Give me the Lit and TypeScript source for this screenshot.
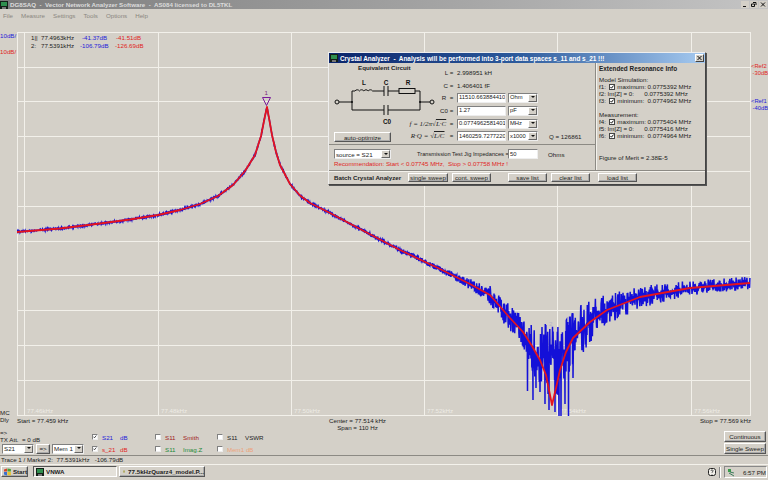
import {LitElement, html, css, svg} from 'lit';
import {customElement} from 'lit/decorators.js';

type Pt = [number, number];

// model curve read off the reference, in page pixels
const RED: Pt[] = [
  [17, 232], [60, 228.5], [100, 223.5], [130, 219.5], [158, 215], [180, 210], [200, 204], [218, 196],
  [233, 185], [245, 171], [255, 155], [261, 136], [265, 116], [267, 107], [269, 118], [272, 135],
  [276, 152], [280, 165], [290, 184], [300, 195.5], [310, 203], [320, 208], [330, 213], [360, 229],
  [400, 250], [440, 269], [470, 284], [490, 295], [510, 318], [523, 332], [532, 346], [540, 360],
  [546, 375], [552, 405], [556, 388], [560, 370], [566, 352], [573, 338], [590, 322], [607, 310],
  [640, 297], [690, 288], [750, 283],
];

// half height of the measured trace's noise band along x
const NOISE: Pt[] = [
  [17, 1], [330, 1], [400, 2], [440, 3], [460, 4], [480, 7], [500, 12], [520, 15], [530, 22],
  [545, 36], [552, 40], [560, 38], [575, 28], [600, 18], [640, 11], [700, 7], [750, 7],
];

// deep notches below the band, round the dip
const SPIKES: Pt[] = [
  [527.5, 391], [533, 400], [536, 388], [540, 392], [545, 404], [549, 410], [555, 412],
  [559, 416], [561, 416], [565, 404], [568.5, 416], [573, 378],
];

const lerp = (t: Pt[], x: number) => {
  for (let i = 1; i < t.length; i++) {
    if (x <= t[i][0]) {
      const [x0, y0] = t[i - 1];
      const [x1, y1] = t[i];
      return y0 + ((y1 - y0) * (x - x0)) / (x1 - x0);
    }
  }
  return t[t.length - 1][1];
};

const rng = (seed: number) => () => {
  seed = (seed + 0x6d2b79f5) | 0;
  let t = Math.imul(seed ^ (seed >>> 15), 1 | seed);
  t = (t + Math.imul(t ^ (t >>> 7), 61 | t)) ^ t;
  return ((t ^ (t >>> 14)) >>> 0) / 4294967296;
};

const bluePoints = () => {
  const r = rng(77);
  const step = 0.3;
  const pts: string[] = [];
  for (let x = 17; x <= 750; x += step) {
    // bunch the samples towards the middle so the band reads as solid with spiky edges
    const u = (r() - 0.5) * 2;
    const n = Math.sign(u) * Math.abs(u) ** 1.6;
    const y = Math.min(lerp(RED, x), 358) + n * lerp(NOISE, x);
    pts.push(`${x.toFixed(2)},${y.toFixed(1)}`);
    const spike = SPIKES.find(s => s[0] >= x && s[0] < x + step);
    if (spike) pts.push(spike.join(','));
  }
  return pts.join(' ');
};

const redPoints = RED.map(p => p.join(',')).join(' ');
const VX = [17, 24, 158, 291, 424, 557, 691, 750];
const HY = [32, 67, 101, 136, 171, 206, 241, 275, 310, 345, 380, 415];
const AXIS = ['77.46', '77.48', '77.50', '77.52', '77.54', '77.56'];

@customElement('app-root')
export class AppRoot extends LitElement {
  static styles = css`
    :host {
      display: flex;
      flex-direction: column;
      position: relative;
      width: 768px;
      height: 480px;
      overflow: hidden;
      background: #d4d0c8;
      color: #222;
      font: 6.2px/7px 'Liberation Sans', Arial, sans-serif;
    }
    .title {
      height: 9px;
      flex: none;
      display: flex;
      align-items: center;
      gap: 2px;
      background: linear-gradient(90deg, #7c7c7c, #a0a0a0 52%, #c4c4c4);
      color: #dcdcdc;
      font-weight: bold;
      font-size: 6.2px;
      white-space: pre;
    }
    .winbtns {
      margin-left: auto;
      margin-right: 1px;
      display: flex;
      gap: 1px;
    }
    .winbtns svg {
      display: block;
      width: 8px;
      height: 7px;
    }
    .menu {
      height: 12px;
      flex: none;
      display: flex;
      gap: 8px;
      align-items: center;
      padding-left: 3px;
      color: #8a8780;
    }
    .chart-row {
      display: flex;
      flex: none;
      padding-top: 11px;
    }
    .left-labels {
      width: 17px;
      white-space: nowrap;
      flex: none;
    }
    .left-labels div + div {
      margin-top: 9px;
    }
    .chart {
      display: block;
      width: 734px;
      height: 384px;
      flex: none;
    }
    .chart text {
      font: 6.2px 'Liberation Sans', Arial, sans-serif;
    }
    .chart .axis {
      fill: #eeece6;
    }
    .right-labels {
      padding-top: 31px;
      white-space: nowrap;
      font-size: 5.8px;
    }
    .right-labels div {
      height: 7px;
    }
    .right-labels .gap {
      margin-bottom: 21px;
    }
    .blue { color: #2420d8; }
    .red { color: #e02424; }
    .dkred { color: #a02020; }
    .green { color: #1e8a3a; }
    .orange { color: #eda27c; }
    .lines {
      height: 16px;
      flex: none;
      display: grid;
      grid-template-columns: 17px 200px 281px 1fr;
      line-height: 7px;
      white-space: nowrap;
    }
    .lines .mc {
      margin-top: -7px;
      white-space: pre;
    }
    .lines .start { padding-top: 1px; }
    .lines .center { text-align: center; padding-top: 1px; }
    .lines .stop { text-align: right; padding: 1px 17px 0 0; }
    .controls {
      height: 26px;
      flex: none;
      display: flex;
      margin-top: -3px;
    }
    .att {
      width: 90px;
      flex: none;
    }
    .att > div {
      white-space: pre;
    }
    .att-row {
      display: flex;
      gap: 2px;
      padding-left: 2px;
      margin-top: 0.5px;
    }
    .arrow-btn {
      width: 14px;
    }
    .checks {
      display: grid;
      grid-template-columns: 63px 62px 60px;
      grid-template-rows: 12px 12px;
      padding: 2px 0 0 2px;
      align-items: center;
    }
    .check {
      display: flex;
      align-items: center;
      white-space: nowrap;
    }
    .check .nm {
      margin-left: 4px;
      min-width: 18px;
    }
    .box {
      width: 6px;
      height: 6px;
      flex: none;
      box-sizing: border-box;
      background: #fff;
      border: 1px solid;
      border-color: #808080 #eee #eee #808080;
      display: block;
    }
    .mini {
      width: 6px;
      height: 6px;
      vertical-align: -1px;
      display: inline-block;
      margin: 0 1px;
    }
    .sweep {
      margin-left: auto;
      display: flex;
      flex-direction: column;
      gap: 1px;
      width: 42px;
      margin-right: 2px;
      padding-top: 2px;
    }
    .btn {
      box-sizing: border-box;
      display: flex;
      align-items: center;
      justify-content: center;
      background: #d4d0c8;
      border: 1px solid;
      border-color: #fff #555 #555 #fff;
      box-shadow: inset -1px -1px 0 #aaa;
      white-space: nowrap;
      height: 10px;
    }
    .sweep .btn { height: 11px; }
    .status {
      height: 8px;
      flex: none;
      box-sizing: border-box;
      border-top: 1px solid #8c8a84;
      display: flex;
      align-items: center;
      padding-left: 1px;
      white-space: pre;
    }
    .task {
      margin-top: auto;
      height: 16px;
      flex: none;
      box-sizing: border-box;
      border-top: 1px solid #f4f2ec;
      display: flex;
      align-items: flex-start;
      gap: 2px;
      padding: 1px 1px 0;
      font-weight: bold;
    }
    .task .btn {
      height: 11px;
      justify-content: flex-start;
      gap: 2px;
      padding-left: 2px;
      flex: none;
    }
    .start { width: 27px; }
    .task .vnwa {
      width: 84px;
      margin-left: 3px;
      background: #e4e1da;
      border-color: #555 #fff #fff #555;
      box-shadow: none;
    }
    .task .doc { width: 86px; padding-left: 3px; gap: 3px; }
    .tray {
      margin-left: auto;
      display: flex;
      align-items: center;
      gap: 3px;
    }
    .tray-sep {
      width: 0;
      height: 11px;
      border-left: 1px solid #888;
      border-right: 1px solid #fff;
    }
    .clock {
      box-sizing: border-box;
      width: 43px;
      height: 12px;
      display: flex;
      align-items: center;
      gap: 7px;
      padding-left: 2px;
      border: 1px solid;
      border-color: #888 #fff #fff #888;
      font-weight: normal;
      white-space: nowrap;
    }

    /* Crystal Analyzer window */
    .dialog {
      position: absolute;
      left: 328px;
      top: 52px;
      width: 378px;
      height: 133px;
      box-sizing: border-box;
      border: 1px solid;
      border-color: #eee #444 #444 #eee;
      box-shadow: 1px 1px 0 #555;
      background: #d4d0c8;
      display: flex;
      flex-direction: column;
    }
    .dlg-title {
      height: 10px;
      flex: none;
      display: flex;
      align-items: center;
      gap: 2px;
      padding-left: 1px;
      background: linear-gradient(90deg, #0a246a, #2c5a9c 50%, #a6caf0);
      color: #fff;
      font-weight: bold;
      font-size: 6.4px;
      white-space: pre;
    }
    .close {
      margin-left: auto;
      margin-right: 1px;
      width: 9px;
      height: 8px;
      box-sizing: border-box;
      background: #d4d0c8;
      border: 1px solid;
      border-color: #fff #444 #444 #fff;
      display: flex;
    }
    .dlg-main {
      display: grid;
      grid-template-columns: 266px 1fr;
      grid-template-rows: 82px 25px;
      flex: none;
    }
    .upper {
      display: flex;
      border-bottom: 1px solid #8c8a84;
    }
    .circuit {
      width: 112px;
      flex: none;
    }
    .heading {
      font-weight: bold;
      padding: 1px 0 0 29px;
    }
    .circuit svg {
      display: block;
      width: 112px;
      height: 52px;
      margin-top: 4px;
    }
    .circuit text {
      font: bold 6.4px 'Liberation Sans', Arial, sans-serif;
      fill: #111;
      text-anchor: middle;
    }
    .auto {
      width: 57px;
      height: 10px;
      margin: 5px 0 0 5px;
    }
    .form {
      flex: 1;
      padding-top: 3px;
      display: grid;
      grid-template-columns: 14px 1fr;
      grid-auto-rows: 12.8px;
      align-items: center;
    }
    .form .lbl {
      display: flex;
      justify-content: flex-end;
      white-space: pre;
    }
    .form .plain {
      padding-left: 2px;
      white-space: nowrap;
    }
    .form .fld {
      display: flex;
      gap: 2px;
      padding-left: 2px;
      align-items: center;
    }
    .formula {
      font: italic 7px 'Liberation Serif', serif;
      white-space: pre;
      flex: none;
    }
    .over {
      text-decoration: overline;
    }
    .q {
      margin-left: 9px;
      white-space: nowrap;
    }
    .input {
      box-sizing: border-box;
      background: #fff;
      border: 1px solid;
      border-color: #808080 #eee #eee #808080;
      height: 10px;
      width: 49px;
      padding-left: 1px;
      display: flex;
      align-items: center;
      overflow: hidden;
      white-space: nowrap;
      flex: none;
      font-size: 5.8px;
    }
    .input.short { width: 30px; }
    .select {
      box-sizing: border-box;
      background: #fff;
      border: 1px solid;
      border-color: #808080 #eee #eee #808080;
      height: 10px;
      display: flex;
      align-items: center;
      justify-content: space-between;
      padding-left: 1px;
      white-space: nowrap;
      flex: none;
    }
    .select.unit { width: 30px; font-size: 5.8px; }
    .select.src { width: 57px; }
    .select.tr { width: 32px; }
    .arrow {
      width: 9px;
      height: 8px;
      box-sizing: border-box;
      background: #d4d0c8;
      border: 1px solid;
      border-color: #fff #666 #666 #fff;
      position: relative;
      flex: none;
    }
    .arrow::after {
      content: '';
      position: absolute;
      left: 1.5px;
      top: 1.5px;
      border: 2px solid transparent;
      border-top: 2.5px solid #111;
      border-bottom: 0;
    }
    .mid {
      padding: 4px 0 0 5px;
    }
    .mid-row {
      display: flex;
      align-items: center;
      height: 10px;
      white-space: pre;
    }
    .mid-row .jig { margin: 0 1px 0 26px; width: 90px; text-align: right; font-size: 5.7px; }
    .mid-row .ohms { margin-left: 10px; }
    .rec {
      color: #e02424;
      margin-top: 1px;
      white-space: pre;
    }
    .info {
      grid-column: 2;
      grid-row: 1 / span 2;
      border-left: 1px solid #8c8a84;
      box-shadow: inset 1px 0 0 #f4f2ec;
      padding: 2px 0 0 3px;
    }
    .info div {
      white-space: pre;
    }
    .info h3 {
      margin: 0 0 3px;
      font-size: 6.4px;
      line-height: 8px;
      font-weight: bold;
    }
    .info .sp { height: 7px; }
    .info .fom { margin-top: 15px; }
    .batch {
      border-top: 1px solid #8c8a84;
      box-shadow: inset 0 1px 0 #f4f2ec;
      flex: 1;
      display: flex;
      align-items: center;
      padding-left: 5px;
    }
    .batch b {
      width: 74px;
      white-space: nowrap;
    }
    .batch .btn { height: 9px; }
    .b40 { width: 40px; }
    .b38 { width: 39px; margin-left: 4px; }
    .batch .save { margin-left: 17px; }
    .batch .load { margin-left: 8px; }
  `;

  private win() {
    return html`<svg width="8" height="8" viewBox="0 0 8 8"><rect width="8" height="8" fill="#142018"/><rect x="1" y="1" width="6" height="4" fill="#2f8f4e"/><rect x="2" y="6" width="4" height="2" fill="#777"/></svg>`;
  }

  private tick() {
    return html`<svg class="mini" viewBox="0 0 6 6"><rect x=".5" y=".5" width="5" height="5" fill="#fff" stroke="#444"/><path d="M1.5 3l1 1.2 2-2.6" fill="none" stroke="#111"/></svg>`;
  }

  private check(on: boolean, name: string, unit: string, nameCls: string, unitCls = nameCls) {
    return html`<div class="check">
      ${on
        ? html`<svg class="box" viewBox="0 0 6 6"><path d="M.8 2.6l1.4 1.6 2.8-3.4" fill="none" stroke="#111" stroke-width="1.1"/></svg>`
        : html`<span class="box"></span>`}
      <span class="nm ${nameCls}">${name}</span><span class=${unitCls}>${unit}</span>
    </div>`;
  }

  private chart() {
    return html`<svg class="chart" viewBox="17 32 734 384">
      ${VX.map(x => svg`<line x1=${x + 0.5} x2=${x + 0.5} y1="32" y2="416" stroke="#f2f0ea"/>`)}
      ${HY.map(y => svg`<line x1="17" x2="751" y1=${y + 0.5} y2=${y + 0.5} stroke="#f2f0ea"/>`)}
      ${AXIS.map((t, i) => svg`<text class="axis" x=${VX[i + 1] + 3} y="412.5">${t}kHz</text>`)}
      <text x="31" y="40" fill="#222">1||</text>
      <text x="41" y="40" fill="#222">77.4963kHz</text>
      <text x="82" y="40" fill="#2420d8">-41.37dB</text>
      <text x="116" y="40" fill="#e02424">-41.51dB</text>
      <text x="31" y="47.5" fill="#222">2:</text>
      <text x="41" y="47.5" fill="#222">77.5391kHz</text>
      <text x="80" y="47.5" fill="#2420d8">-106.79dB</text>
      <text x="115" y="47.5" fill="#e02424">-126.69dB</text>
      <polyline points=${bluePoints()} fill="none" stroke="#1410d8" stroke-width="1.5"/>
      <polyline points=${redPoints} fill="none" stroke="#e4141e" stroke-width="1.8" stroke-linejoin="round"/>
      <text x="264.5" y="95" fill="#7a2a7a">1</text>
      <path d="M262.5 97.5h8l-4 8z" fill="none" stroke="#7a1a9a" stroke-width="1"/>
      <text x="549" y="326" fill="#b4b4c8">2</text>
    </svg>`;
  }

  private circuit() {
    return html`<svg viewBox="329 75 112 52">
      <g fill="none" stroke="#111" stroke-width="1">
        <circle cx="337" cy="102" r="2"/>
        <circle cx="432" cy="102" r="2"/>
        <path d="M339 102h13M352 91v19M352 110h32M388 110h32M420 91v19M420 102h10"/>
        <path d="M352 91h3a2.6 2.6 0 0 1 4.400 0a2.6 2.6 0 0 1 4.400 0a2.6 2.6 0 0 1 4.400 0a2.6 2.6 0 0 1 4.400 0h11.400"/>
        <path d="M384 86v10M388 86v10M388 91h11M415 91h5M384 105v10M388 105v10"/>
        <rect x="399" y="88.500" width="16" height="5"/>
      </g>
      <g fill="#111"><circle cx="352" cy="102" r="1"/><circle cx="420" cy="102" r="1"/></g>
      <text x="364" y="85">L</text>
      <text x="386" y="85">C</text>
      <text x="408" y="85">R</text>
      <text x="387" y="124">C0</text>
    </svg>`;
  }

  private dialog() {
    return html`<div class="dialog">
      <div class="dlg-title">
        ${this.win()}<span>Crystal Analyzer  -  Analysis will be performed into 3-port data spaces s_11 and s_21 !!!</span>
        <span class="close"><svg viewBox="0 0 7 6"><path d="M1.5 1l4 4M5.5 1l-4 4" stroke="#111" fill="none"/></svg></span>
      </div>
      <div class="dlg-main">
        <div class="upper">
          <div class="circuit">
            <div class="heading">Equivalent Circuit</div>
            ${this.circuit()}
            <div class="btn auto">auto-optimize</div>
          </div>
          <div class="form">
            <div class="lbl">L = </div><div class="plain">2.998951 kH</div>
            <div class="lbl">C = </div><div class="plain">1.406401 fF</div>
            <div class="lbl">R  = </div>
            <div class="fld"><div class="input">11510.663884410</div><div class="select unit">Ohm<span class="arrow"></span></div></div>
            <div class="lbl">C0 = </div>
            <div class="fld"><div class="input">1.27</div><div class="select unit">pF<span class="arrow"></span></div></div>
            <div class="lbl"><span class="formula">f = 1/2π√<span class="over">L·C</span></span><span>  = </span></div>
            <div class="fld"><div class="input">0.0774962581401</div><div class="select unit">MHz<span class="arrow"></span></div></div>
            <div class="lbl"><span class="formula">R·Q = √<span class="over">L/C</span></span><span>   = </span></div>
            <div class="fld"><div class="input">1460259.7277220</div><div class="select unit">x1000<span class="arrow"></span></div><span class="q">Q = 126861</span></div>
          </div>
        </div>
        <div class="info">
          <h3>Extended Resonance Info</h3>
          <div>Model Simulation:</div>
          <div>f1: ${this.tick()} maximum: 0.0775392 MHz</div>
          <div>f2: Im[Z] = 0:      0.0775392 MHz</div>
          <div>f3: ${this.tick()} minimum:  0.0774962 MHz</div>
          <div class="sp"></div>
          <div>Measurement:</div>
          <div>f4: ${this.tick()} maximum: 0.0775404 MHz</div>
          <div>f5: Im[Z] = 0:      0.0775416 MHz</div>
          <div>f6: ${this.tick()} minimum:  0.0774964 MHz</div>
          <div class="fom">Figure of Merit = 2.38E-5</div>
        </div>
        <div class="mid">
          <div class="mid-row">
            <div class="select src">source = S21<span class="arrow"></span></div>
            <span class="jig">Transmission Test Jig Impedances =</span>
            <div class="input short">50</div>
            <span class="ohms">Ohms</span>
          </div>
          <div class="rec">Recommendation: Start &lt; 0.07745 MHz,  Stop &gt; 0.07758 MHz !</div>
        </div>
      </div>
      <div class="batch">
        <b>Batch Crystal Analyzer</b>
        <div class="btn b40">single sweep</div>
        <div class="btn b38">cont. sweep</div>
        <div class="btn b38 save">save list</div>
        <div class="btn b38">clear list</div>
        <div class="btn b38 load">load list</div>
      </div>
    </div>`;
  }

  override render() {
    return html`
      <div class="title">
        ${this.win()}<span>DG8SAQ  -  Vector Network Analyzer Software  -  AS084 licensed to DL5TKL</span>
        <div class="winbtns">
          <svg viewBox="0 0 8 7"><rect width="8" height="7" fill="#d4d0c8"/><path d="M2 5.500h3" stroke="#111"/></svg>
          <svg viewBox="0 0 8 7"><rect width="8" height="7" fill="#d4d0c8"/><path d="M3 1.500h3v2.500M1.500 3h3v2.500h-3z" stroke="#111" fill="none"/></svg>
          <svg viewBox="0 0 8 7"><rect width="8" height="7" fill="#d4d0c8"/><path d="M2 1.500l4 4M6 1.500l-4 4" stroke="#111" fill="none"/></svg>
        </div>
      </div>
      <div class="menu"><span>File</span><span>Measure</span><span>Settings</span><span>Tools</span><span>Options</span><span>Help</span></div>
      <div class="chart-row">
        <div class="left-labels"><div class="blue">10dB/</div><div class="red">10dB/</div></div>
        ${this.chart()}
        <div class="right-labels">
          <div class="red">&lt;Ref2</div><div class="red gap">&nbsp;-30dB</div>
          <div class="blue">&lt;Ref1</div><div class="blue">&nbsp;-40dB</div>
        </div>
      </div>
      <div class="lines">
        <div class="mc">MC
Dly</div>
        <div class="start">Start = 77.459 kHz</div>
        <div class="center">Center = 77.514 kHz<br>Span = 110 Hz</div>
        <div class="stop">Stop = 77.569 kHz</div>
      </div>
      <div class="controls">
        <div class="att">
          <div>=&gt;</div>
          <div>TX Att.  = 0 dB</div>
          <div class="att-row">
            <div class="select tr">S21<span class="arrow"></span></div>
            <div class="btn arrow-btn">=&gt;</div>
            <div class="select tr">Mem 1<span class="arrow"></span></div>
          </div>
        </div>
        <div class="checks">
          ${this.check(true, 'S21', 'dB', 'blue')}
          ${this.check(false, 'S11', 'Smith', 'dkred')}
          ${this.check(false, 'S11', 'VSWR', '')}
          ${this.check(true, 's_21', 'dB', 'red')}
          ${this.check(false, 'S11', 'Imag.Z', 'green')}
          ${this.check(false, 'Mem1 dB', '', 'orange')}
        </div>
        <div class="sweep">
          <div class="btn">Continuous</div>
          <div class="btn">Single Sweep</div>
        </div>
      </div>
      <div class="status">Trace 1 / Marker 2:  77.5391kHz   -106.79dB</div>
      <div class="task">
        <div class="btn start">
          <svg width="8" height="8" viewBox="0 0 8 8"><path d="M0 1l3.500-1v3.500H0z" fill="#d8452a"/><path d="M4 0l4 .5v3H4z" fill="#4ba23a"/><path d="M0 4h3.500v4L0 7z" fill="#3a6fd0"/><path d="M4 4h4v4l-4-.5z" fill="#e8c22a"/></svg>
          Start
        </div>
        <div class="btn vnwa">${this.win()}VNWA</div>
        <div class="btn doc">
          <svg width="8" height="9" viewBox="0 0 8 9"><path d="M1 1c2 1 5 1 6 0v7H5V3H3v5H1z" fill="#c9a93a" stroke="#6a8a3a" stroke-width=".5"/></svg>
          77.5kHzQuarz4_model.P...
        </div>
        <div class="tray">
          <svg width="8" height="8" viewBox="0 0 8 8"><rect x=".5" y=".5" width="7" height="7" rx="2" fill="#f2f0ea" stroke="#222"/><path d="M3 3c0-1.500 2.200-1.500 2 0 0 .8-1 .8-1 1.800M4 6v.6" fill="none" stroke="#222" stroke-width=".8"/></svg>
          <span class="tray-sep"></span>
          <div class="clock">
            <svg width="9" height="9" viewBox="0 0 9 9"><path d="M1 1h3v3H1z" fill="#3a9a4a"/><path d="M2 5l5 3M3 4l4 1" stroke="#3a7a5a" fill="none"/></svg>
            <span>6:57 PM</span>
          </div>
        </div>
      </div>
      ${this.dialog()}
    `;
  }
}
